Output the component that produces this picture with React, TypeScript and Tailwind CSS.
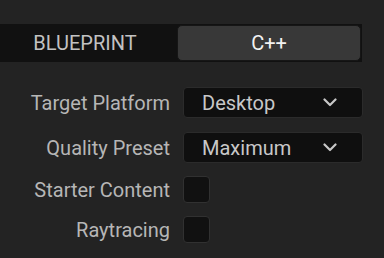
import React from "react";

function Chevron() {
  return (
    <svg width="14" height="9" viewBox="0 0 14 9" className="shrink-0">
      <path d="M1.5 1.5 L7 7 L12.5 1.5" fill="none" stroke="#c8c8c8" strokeWidth="2.2" strokeLinecap="round" strokeLinejoin="round" />
    </svg>
  );
}

function Dropdown({ value }: { value: string }) {
  return (
    <div className="flex h-[31px] w-[180px] items-center justify-between rounded-[4px] border border-[#2b2b2b] bg-[#0f0f0f] pl-[18px] pr-[25px] text-[20px] text-[#c8c8c8]">
      <span>{value}</span>
      <Chevron />
    </div>
  );
}

function Checkbox() {
  return <div className="h-[27px] w-[27px] rounded-[4px] border border-[#313131] bg-[#111111]" />;
}

function Row({ label, children, className }: { label: string; children: React.ReactNode; className?: string }) {
  return (
    <div className={"flex items-center " + (className ?? "")}>
      <div className="w-[170px] text-right text-[20px] leading-none text-[#b6b6b6]">{label}</div>
      <div className="ml-[13px]">{children}</div>
    </div>
  );
}

export default function App() {
  return (
    <div
      className="h-[258px] w-[384px] overflow-hidden bg-[#232323] pt-[24px]"
      style={{ fontFamily: "Roboto, 'Liberation Sans', sans-serif" }}
    >
      <div className="flex h-[38px] w-[362px] items-center bg-[#111111]">
        <div className="w-[170px] text-center text-[20px] text-[#c2c2c2]">BLUEPRINT</div>
        <div className="ml-[7px] flex h-[36px] w-[184px] items-center justify-center rounded-[5px] border border-[#161616] bg-[#383838] text-[20px] text-[#f2f2f2]">
          C++
        </div>
      </div>
      <Row label="Target Platform" className="mt-[25px]">
        <Dropdown value="Desktop" />
      </Row>
      <Row label="Quality Preset" className="mt-[14px]">
        <Dropdown value="Maximum" />
      </Row>
      <Row label="Starter Content" className="mt-[13px]">
        <Checkbox />
      </Row>
      <Row label="Raytracing" className="mt-[13px]">
        <Checkbox />
      </Row>
    </div>
  );
}
